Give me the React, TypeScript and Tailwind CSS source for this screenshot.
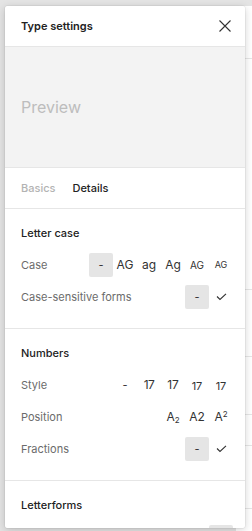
import React from 'react'

const Check = () => (
  <svg width="11" height="8" viewBox="0 0 11 8" fill="none">
    <path d="M1 3.5 L4 6.5 L10 0.8" stroke="#333" strokeWidth="1.1" />
  </svg>
)

const Cell = ({children, active = false}: {children?: React.ReactNode; active?: boolean}) => (
  <div
    className={`w-6 h-6 flex items-center justify-center rounded-[2px] text-[#333] ${
      active ? 'bg-[#e5e5e5]' : ''
    }`}
  >
    {children}
  </div>
)

const Row = ({label, children}: {label: string; children: React.ReactNode}) => (
  <div className="h-8 flex items-center justify-between">
    <span className="text-[11px] text-[#6b6b6b]">{label}</span>
    <div className="flex items-center">{children}</div>
  </div>
)

const Section = ({title, children, last = false}: {title: string; children?: React.ReactNode; last?: boolean}) => (
  <div className={`pl-4 pr-3 pt-2 ${last ? '' : 'pb-[15px] border-b border-[#e6e6e6]'}`}>
    <div className="h-8 flex items-center text-[11px] font-medium text-[#222]">{title}</div>
    {children}
  </div>
)

export default function App() {
  return (
    <div
      className="relative w-[252px] h-[531px] overflow-hidden bg-[#e4e4e4]"
      style={{fontFamily: 'Inter, "Noto Sans", sans-serif'}}
    >
      {/* canvas side panel behind */}
      <div className="absolute left-[236px] top-[6px] w-[20px] h-[525px] bg-white">
        <div className="mt-[52px] border-b border-[#e6e6e6]" />
        <div className="mt-[230px] border-b border-[#e6e6e6]" />
        <div className="mt-[66px] border-b border-[#e6e6e6]" />
        <div className="mt-[57px] border-b border-[#e6e6e6]" />
        <div className="mt-[30px] border-b border-[#e6e6e6]" />
        <div className="mt-[62px] border-b border-[#e6e6e6]" />
      </div>

      <div className="absolute left-[5px] top-[6px] w-[240px] h-[522px] bg-white rounded-[2px] shadow-[0_2px_8px_rgba(0,0,0,0.18),0_0_0_0.5px_rgba(0,0,0,0.08)] flex flex-col overflow-hidden">
        <div className="h-[41px] shrink-0 flex items-center justify-between pl-4 pr-[14px] border-b border-[#e6e6e6]">
          <span className="text-[11px] font-semibold text-[#222]">Type settings</span>
          <svg width="12" height="12" viewBox="0 0 12 12" fill="none">
            <path d="M0.5 0.5 L11.5 11.5 M11.5 0.5 L0.5 11.5" stroke="#333" strokeWidth="1.1" />
          </svg>
        </div>

        <div className="h-[121px] shrink-0 bg-[#f3f3f3] border-b border-[#e6e6e6] flex items-center pl-4">
          <span className="text-[16px] text-[#bdbdbd] leading-[24px]">Preview</span>
        </div>

        <div className="h-[41px] shrink-0 flex items-center gap-[17px] pl-4 border-b border-[#e6e6e6] text-[11px] font-medium">
          <span className="text-[#b3b3b3]">Basics</span>
          <span className="text-[#222]">Details</span>
        </div>

        <Section title="Letter case">
          <Row label="Case">
            <Cell active>
              <span className="text-[11px]">-</span>
            </Cell>
            <Cell><span className="text-[12px]">AG</span></Cell>
            <Cell><span className="text-[12px]">ag</span></Cell>
            <Cell><span className="text-[12px]">Ag</span></Cell>
            <Cell><span className="text-[10px]">AG</span></Cell>
            <Cell><span className="text-[9px]">AG</span></Cell>
          </Row>
          <Row label="Case-sensitive forms">
            <Cell active>
              <span className="text-[11px]">-</span>
            </Cell>
            <Cell><Check /></Cell>
          </Row>
        </Section>

        <Section title="Numbers">
          <Row label="Style">
            <Cell><span className="text-[11px]">-</span></Cell>
            <Cell><span className="text-[12px] tracking-[-0.5px]">17</span></Cell>
            <Cell><span className="text-[12px]">17</span></Cell>
            <Cell><span className="text-[11px] translate-y-[1px]">17</span></Cell>
            <Cell><span className="text-[11px] translate-y-[1px]">17</span></Cell>
          </Row>
          <Row label="Position">
            <Cell>
              <span className="text-[12px]">
                A<span className="text-[8px] relative top-[2px]">2</span>
              </span>
            </Cell>
            <Cell><span className="text-[12px]">A2</span></Cell>
            <Cell>
              <span className="text-[12px]">
                A<span className="text-[8px] relative -top-[4px]">2</span>
              </span>
            </Cell>
          </Row>
          <Row label="Fractions">
            <Cell active>
              <span className="text-[11px]">-</span>
            </Cell>
            <Cell><Check /></Cell>
          </Row>
        </Section>

        <Section title="Letterforms" last>
          <Row label="">
            <Cell active />
          </Row>
        </Section>
      </div>
    </div>
  )
}
